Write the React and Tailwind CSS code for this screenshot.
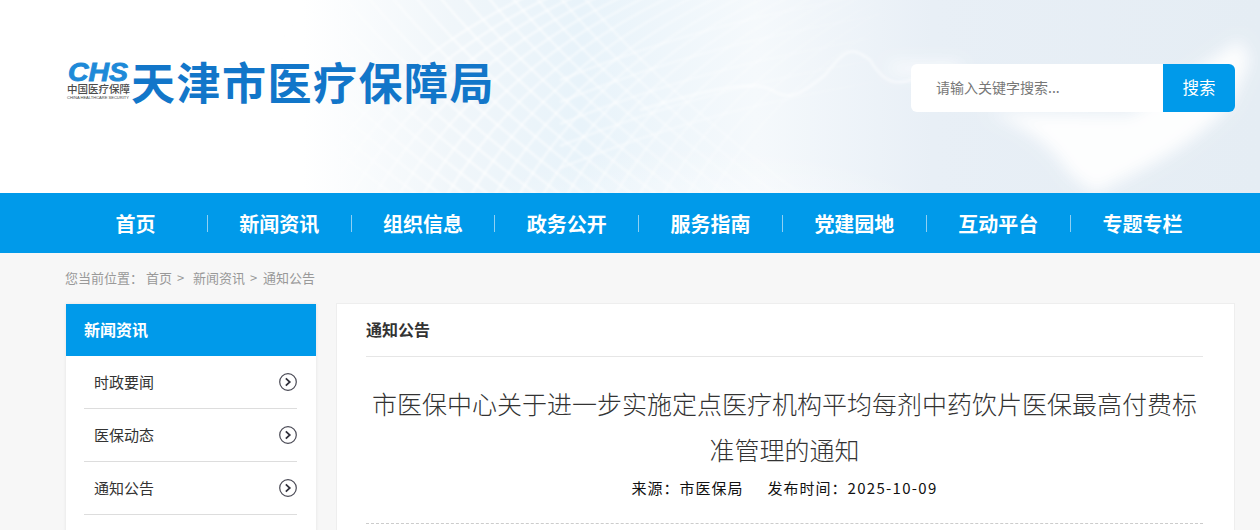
import React from 'react';

const FONT = '"Noto Sans CJK SC", "Liberation Sans", sans-serif';
const NAV = ['首页', '新闻资讯', '组织信息', '政务公开', '服务指南', '党建园地', '互动平台', '专题专栏'];
const SIDE = ['时政要闻', '医保动态', '通知公告'];
const COLON = '\uFF1A';

// curved net lines of the banner
const meshA = Array.from({ length: 18 }, (_, i) => {
  const x = 170 + i * 24;
  return `M${x} -10 C ${x + 40} 40, ${x + 110} 110, ${x + 230} 200`;
});
const meshB = Array.from({ length: 18 }, (_, i) => {
  const x = 300 + i * 24;
  return `M${x} 200 C ${x + 40} 130, ${x + 110} 50, ${x + 240} -10`;
});
const meshC = Array.from({ length: 5 }, (_, i) => {
  const y = 20 + i * 22;
  return `M560 ${y + 60} C 660 ${y + 20}, 760 ${y - 10}, 960 ${y - 40}`;
});

const Banner = () => (
  <svg className="absolute inset-0" width="1260" height="193" viewBox="0 0 1260 193">
    <defs>
      <linearGradient id="base" x1="0" x2="1" y1="0" y2="0">
        <stop offset="0.24" stopColor="#ffffff" />
        <stop offset="0.36" stopColor="#f0f6fa" />
        <stop offset="0.46" stopColor="#e8f3fa" />
        <stop offset="0.6" stopColor="#f5f9fc" />
        <stop offset="0.74" stopColor="#e8eff6" />
        <stop offset="1" stopColor="#e5edf4" />
      </linearGradient>
      <radialGradient id="glow" cx="0.5" cy="1" r="0.7">
        <stop offset="0" stopColor="#ffffff" />
        <stop offset="1" stopColor="#ffffff" stopOpacity="0" />
      </radialGradient>
      <linearGradient id="fade" gradientUnits="userSpaceOnUse" x1="280" x2="900" y1="0" y2="0">
        <stop offset="0" stopColor="#fff" stopOpacity="0" />
        <stop offset="0.3" stopColor="#fff" stopOpacity="0.7" />
        <stop offset="0.55" stopColor="#fff" stopOpacity="0.45" />
        <stop offset="1" stopColor="#fff" stopOpacity="0" />
      </linearGradient>
      <filter id="b1"><feGaussianBlur stdDeviation="1" /></filter>
      <filter id="b2"><feGaussianBlur stdDeviation="8" /></filter>
    </defs>
    <rect width="1260" height="193" fill="url(#base)" />
    <g fill="none" stroke="url(#fade)" strokeWidth="2.2" filter="url(#b1)">
      {[...meshA, ...meshB, ...meshC].map((d) => (
        <path key={d} d={d} />
      ))}
    </g>
    <path d="M640 110 C 720 85, 760 80, 775 92 C 790 100, 800 95, 825 75 C 845 50, 850 45, 870 60 C 885 85, 900 90, 930 70" fill="none" stroke="#fff" strokeOpacity="0.45" strokeWidth="3" filter="url(#b1)" />
    <ellipse cx="700" cy="193" rx="230" ry="120" fill="url(#glow)" />
    <g fill="#ffffff" filter="url(#b2)" opacity="0.95">
      <path d="M985 112 C 1020 125, 1050 140, 1070 175 L 1095 193 C 1130 175, 1190 150, 1230 105 L 1250 60 L 1240 40 L 1130 115 Z" />
      <path d="M890 72 L 960 76 L 960 64 L 890 64 Z" />
    </g>
  </svg>
);

// logo: mark + name
const Logo = () => (
  <div className="flex items-center">
    <svg width="66" height="44" viewBox="0 0 66 44" className="shrink-0 overflow-visible">
      <text x="3" y="22" fill="#1e8ad8" stroke="#1e8ad8" strokeWidth="0.9" fontSize="26" fontWeight="700" fontStyle="italic" fontFamily="Liberation Sans" textLength="60" lengthAdjust="spacingAndGlyphs">CHS</text>
      <text x="2" y="34" fill="#4a4a4a" fontSize="10.4" fontWeight="500" fontFamily={FONT} textLength="63" lengthAdjust="spacingAndGlyphs">中国医疗保障</text>
      <text x="2" y="40" fill="#444" fontSize="4" fontFamily="Liberation Sans" textLength="62" lengthAdjust="spacingAndGlyphs">CHINA HEALTHCARE SECURITY</text>
    </svg>
    <span className="text-[44px] leading-[50px] font-bold tracking-[1.5px] text-[#1276c9] whitespace-nowrap">天津市医疗保障局</span>
  </div>
);

const Header = () => (
  <header className="relative h-[193px] overflow-hidden">
    <Banner />
    <div className="relative flex h-full items-start justify-between pl-[66px] pr-[25px]">
      <div className="mt-[56px] -ml-[1px]">
        <Logo />
      </div>
      <div className="mt-[64px] flex h-12 w-[324px] overflow-hidden rounded-md bg-white">
        <div className="flex flex-1 items-center pb-[2px] pl-[25px] text-[14px] text-[#777]">请输入关键字搜索...</div>
        <button className="w-[72px] bg-[#009aea] pb-[2px] text-[16.5px] text-white">搜索</button>
      </div>
    </div>
  </header>
);

const Nav = () => (
  <nav className="flex h-[60px] items-center bg-[#009aea] pl-[64px]">
    {NAV.map((item, i) => (
      <a
        key={item}
        className={`flex h-[17px] w-[143.8px] items-center justify-center pt-[2px] text-[20px] font-bold text-white ${
          i < NAV.length - 1 ? 'border-r border-[#8fd0f3]' : ''
        }`}
      >
        {item}
      </a>
    ))}
  </nav>
);

const Arrow = () => (
  <svg width="18" height="18" viewBox="0 0 18 18" fill="none" className="shrink-0">
    <circle cx="9" cy="9" r="8.3" stroke="#4a4a55" strokeWidth="1.2" />
    <path d="M6.8 5.4 10.8 9l-4 3.6" stroke="#2f2f3a" strokeWidth="1.7" />
  </svg>
);

const Sidebar = () => (
  <aside className="h-[230px] w-[250px] shrink-0 bg-white shadow-[0_0_3px_#e2e2e2]">
    <div className="flex h-[52px] items-center bg-[#009aea] pb-[2px] pl-[18px] text-[16px] font-bold text-white">新闻资讯</div>
    <ul className="pr-[19px] pl-[18px]">
      {SIDE.map((item) => (
        <li key={item} className="flex h-[53px] items-center justify-between border-b border-[#dddddd] pl-[10px] text-[15px] text-[#333]">
          {item}
          <Arrow />
        </li>
      ))}
    </ul>
  </aside>
);

const Article = () => (
  <main className="-mt-px h-[231px] flex-1 border border-[#eeeeee] bg-white pr-[31px] pl-[29px]">
    <div className="flex h-[53px] items-center border-b border-[#e6e6e6] pb-[2px] text-[16px] font-bold text-[#333]">通知公告</div>
    <h1 className="mt-[23px] text-center text-[25px] leading-[46px] font-light text-[#333]">
      市医保中心关于进一步实施定点医疗机构平均每剂中药饮片医保最高付费标准管理的通知
    </h1>
    <div className="mt-[2px] flex h-[28px] items-center justify-center gap-[24px] text-[15px] tracking-[1px] text-[#111]">
      <span>来源{COLON}市医保局</span>
      <span>
        发布时间{COLON}<span className="tracking-[1.3px]">2025-10-09</span>
      </span>
    </div>
    <div className="mt-[21px] border-b border-dashed border-[#cccccc]" />
  </main>
);

const App = () => (
  <div className="h-[530px] w-[1260px] overflow-hidden bg-[#f7f7f7]" style={{ fontFamily: FONT }}>
    <Header />
    <Nav />
    <div className="flex h-[51px] items-center pb-[2px] pl-[65px] text-[13px] whitespace-pre text-[#999]">
      <span className="w-[81px]">您当前位置{COLON}</span>
      <span className="flex w-[47px] gap-[5px]">首页<span>&gt;</span></span>
      <span className="flex w-[70px] gap-[5px]">新闻资讯<span>&gt;</span></span>
      <span>通知公告</span>
    </div>
    <div className="flex gap-[20px] pr-[25px] pl-[66px]">
      <Sidebar />
      <Article />
    </div>
  </div>
);

export default App;
